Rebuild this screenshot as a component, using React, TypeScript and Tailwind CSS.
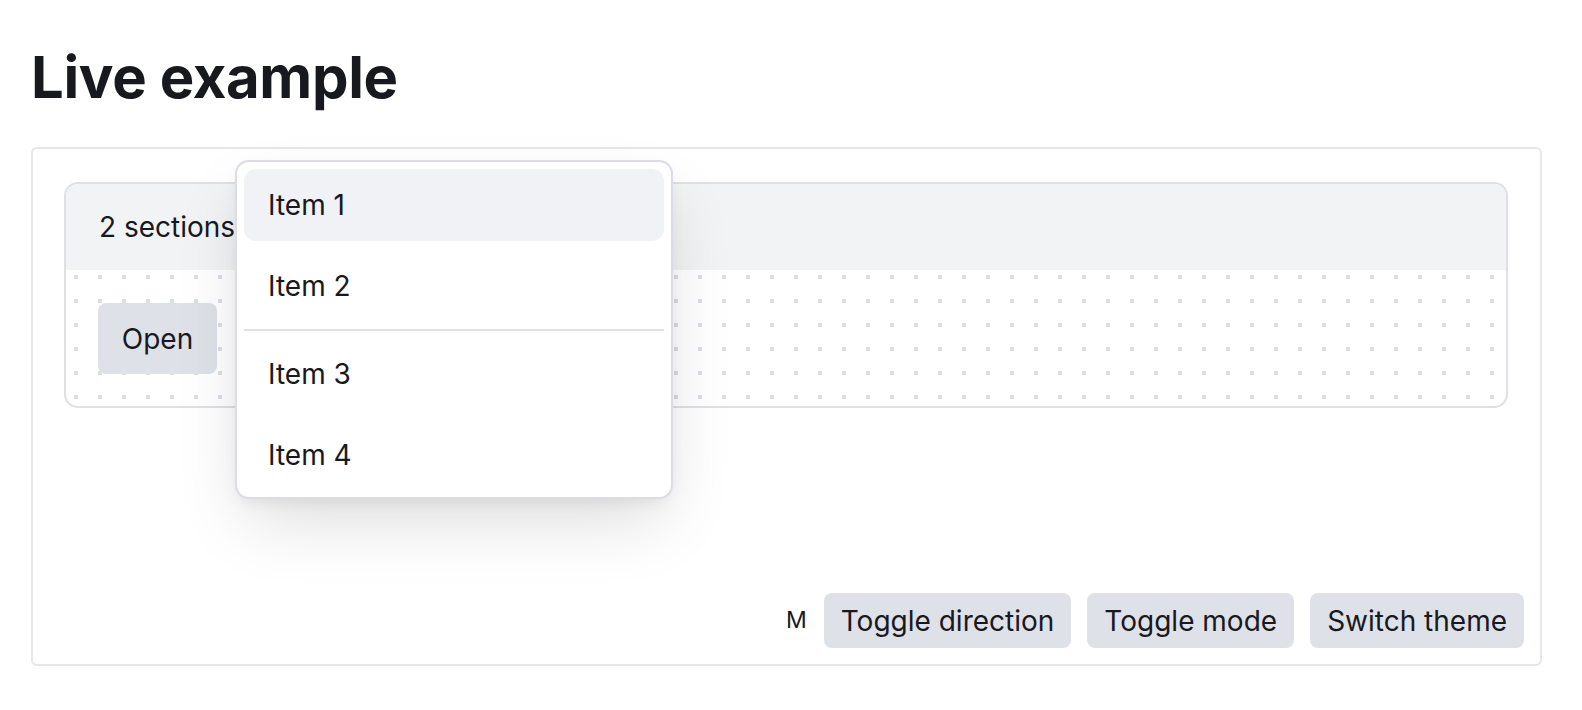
const menuItems = ["Item 1", "Item 2", null, "Item 3", "Item 4"];

const actions = ["Toggle direction", "Toggle mode", "Switch theme"];

export default function App() {
  return (
    <div className="min-h-[710px] bg-white pl-[31px] pt-[48px] font-['Inter',sans-serif] text-[#18191f]">
      <h1 className="mb-[41px] h-[58px] text-[58px] leading-none font-bold tracking-[-0.006em]">Live example</h1>

      <div className="relative flex h-[519px] w-[1511px] flex-col rounded-md border-2 border-[#e7e7e9]">
        <div className="pt-[33px] pr-8 pl-[31px]">
          <div className="overflow-hidden rounded-[14px] border-2 border-[#dfe0e6]">
            <div className="flex h-[86px] items-center bg-[#f2f3f5] px-[33px] text-[28px]">2 sections</div>
            <div className="bg-[conic-gradient(from_270deg_at_4px_4px,#dddde6_25%,transparent_0)] [background-position:8px_5px] [background-size:24px_24px] px-8 pt-[33px] pb-8">
              <button className="h-[71px] w-[119px] rounded-lg bg-[#dfe1e8] text-[28px]">Open</button>
            </div>
          </div>
        </div>

        <div className="mt-auto flex items-center justify-end gap-4 pr-4 pb-4">
          <span className="mr-[1px] text-[23px]">M</span>
          {actions.map((label) => (
            <button key={label} className="h-[55px] rounded-lg bg-[#dfe1e8] px-[17px] text-[28px]">
              {label}
            </button>
          ))}
        </div>

        {/* open dropdown */}
        <div className="absolute top-[11px] left-[202px] flex w-[438px] flex-col gap-[9px] rounded-[14px] border-2 border-[#dcdde4] bg-white p-[7px] pb-[6px] shadow-[0_30px_70px_-10px_rgba(0,0,0,0.14),0_6px_16px_-4px_rgba(0,0,0,0.08)]">
          {menuItems.map((item, i) =>
            item === null ? (
              <div key={i} className="-my-[2px] h-[2px] bg-[#dfe0e6]" />
            ) : (
              <div
                key={item}
                className={`flex h-[72px] items-center rounded-xl px-6 text-[28px] ${i === 0 ? "bg-[#f1f2f5]" : ""}`}
              >
                {item}
              </div>
            )
          )}
        </div>
      </div>
    </div>
  );
}
